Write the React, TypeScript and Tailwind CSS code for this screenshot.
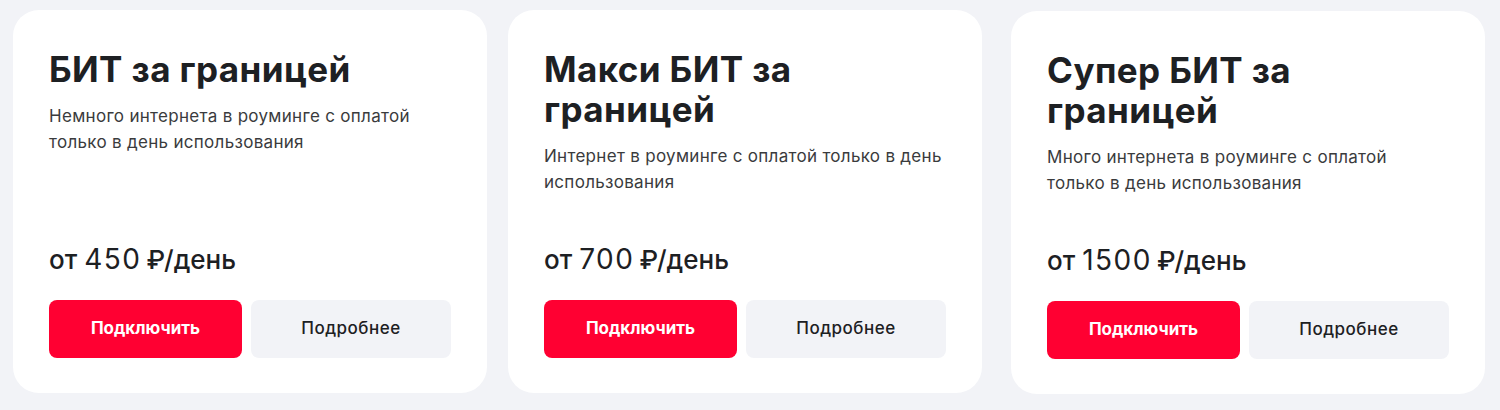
const tariffs = [
  {
    title: "БИТ за границей",
    lines: ["Немного интернета в роуминге с оплатой", "только в день использования"],
    price: "450",
    offset: "",
  },
  {
    title: "Макси БИТ за границей",
    lines: ["Интернет в роуминге с оплатой только в день", "использования"],
    price: "700",
    offset: "ml-[21px]",
  },
  {
    title: "Супер БИТ за границей",
    lines: ["Много интернета в роуминге с оплатой", "только в день использования"],
    price: "1500",
    offset: "ml-[29px] mt-px",
  },
];

function TariffCard({ t }: { t: (typeof tariffs)[number] }) {
  return (
    <div
      className={`flex h-[383px] w-[474px] shrink-0 flex-col rounded-[26px] bg-white px-[36px] pb-[35px] pt-[39px] ${t.offset}`}
    >
      <h3 className="max-w-[320px] text-[35px] font-bold leading-[40px] tracking-[0.4px] text-[#1d2023]">
        {t.title}
      </h3>
      <p className="mt-[14px] text-[17px] leading-[26px] tracking-[0.3px] text-[#3a3b3d]">
        {t.lines.map((l) => (
          <span key={l} className="block whitespace-nowrap">
            {l}
          </span>
        ))}
      </p>
      <div className="mt-auto flex items-baseline leading-[36px] text-[#1d2023]">
        <span className="text-[26px] font-medium">от</span>
        <span className="ml-[7px] text-[28px] font-normal tracking-[1.5px]">{t.price}</span>
        <span className="ml-[5px] text-[26px] font-medium">₽/день</span>
      </div>
      <div className="mt-[22px] flex gap-[9px]">
        <button className="h-[58px] w-[193px] rounded-lg bg-[#ff0032] text-[17px] font-bold text-white">
          Подключить
        </button>
        <button className="h-[58px] flex-1 rounded-lg bg-[#f2f3f7] text-[17px] font-medium tracking-[0.5px] text-[#1d2023]">
          Подробнее
        </button>
      </div>
    </div>
  );
}

export default function App() {
  return (
    <div
      className="flex h-[410px] w-[1500px] items-start bg-[#f2f3f7] pl-[13px] pt-[10px]"
      style={{ fontFamily: "Inter, 'Noto Sans', sans-serif" }}
    >
      {tariffs.map((t) => (
        <TariffCard key={t.price} t={t} />
      ))}
    </div>
  );
}
